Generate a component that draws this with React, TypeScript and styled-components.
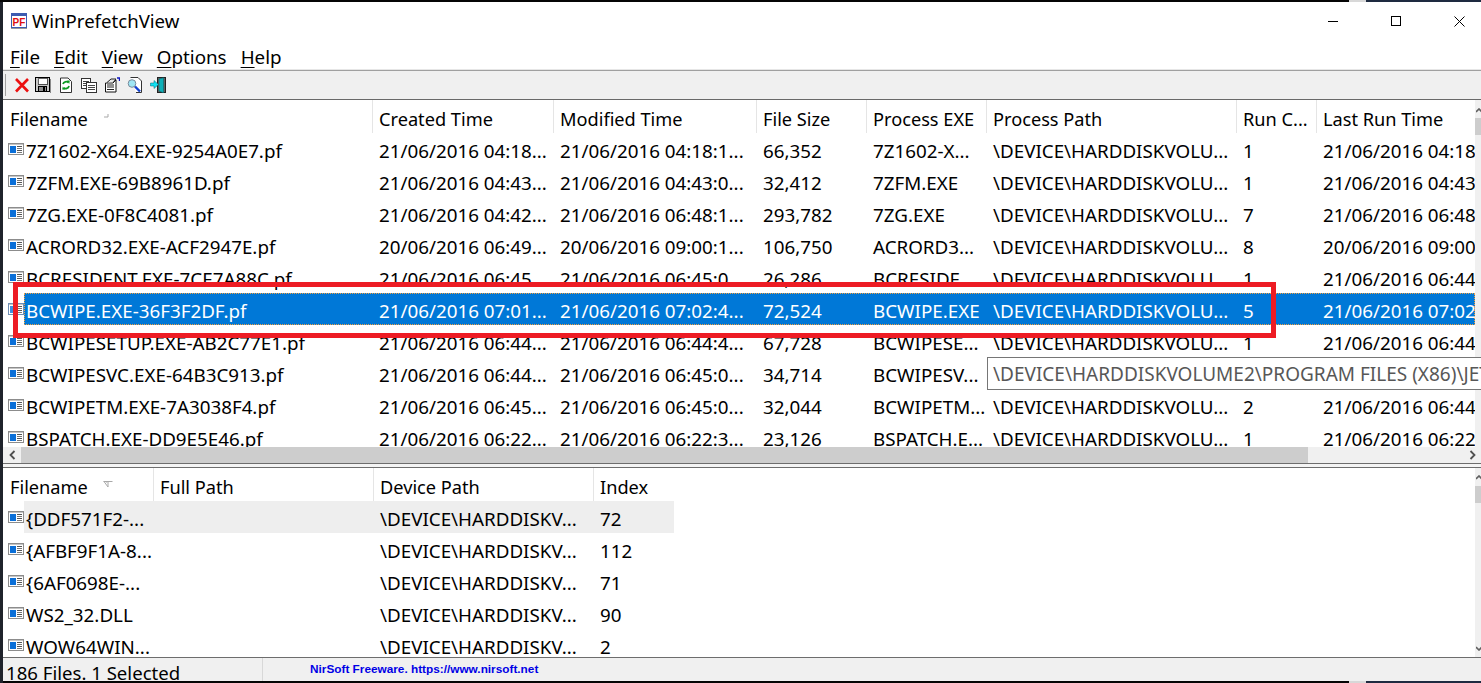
import React from "react";
import styled, { createGlobalStyle } from "styled-components";

const Global = createGlobalStyle`
  html, body { margin: 0; padding: 0; height: 100%; overflow: hidden; background: #1f232b; }
  #root { height: 100%; }
`;

const UI_FONT = `"Noto Sans", "Open Sans", sans-serif`;

const Page = styled.div`
  position: relative;
  width: 1481px;
  height: 683px;
  overflow: hidden;
  padding: 2px 0 2px 3px;
  box-sizing: border-box;
  background: linear-gradient(90deg, #050505 0, #050505 1349px, #d8d8d8 1349px, #d8d8d8 1366px, #1e2a40 1366px);
  font-family: ${UI_FONT};
  color: #000;
`;
const LeftEdge = styled.div`
  position: absolute;
  left: 0; top: 2px; bottom: 0;
  width: 3px;
  background: #1f232b;
`;
const Win = styled.div`
  height: 100%;
  background: #fff;
  display: flex;
  flex-direction: column;
  overflow: hidden;
`;
const TitleBar = styled.div`
  height: 38px;
  flex: none;
  display: flex;
  align-items: center;
  padding-left: 8px;
  gap: 5px;
`;
const TitleText = styled.div`
  font-size: 18.6px;
  line-height: 40px;
  flex: 1;
`;
const WinButtons = styled.div`
  display: flex;
  align-items: center;
  height: 38px;
  padding-right: 16px;
  gap: 52px;
`;
const MenuBar = styled.div`
  height: 30px;
  flex: none;
  display: flex;
  align-items: center;
  padding-left: 7px;
  gap: 14px;
  font-size: 18.8px;
  padding-top: 4px;
  box-sizing: border-box;
`;
const MenuKey = styled.span`
  text-decoration: underline;
  text-underline-offset: 3px;
  text-decoration-thickness: 1px;
`;
const Toolbar = styled.div`
  height: 30px;
  flex: none;
  box-sizing: border-box;
  border-top: 1px solid #a0a0a0;
  border-bottom: 1px solid #696969;
  box-shadow: 0 -1px 0 #e6e6e6;
  background: #f0f0f0;
  display: flex;
  align-items: center;
  padding-left: 2px;
  gap: 7px;
`;
const Grip = styled.div`
  width: 1px;
  height: 22px;
  background: #a0a0a0;
`;
const Pane = styled.div<{ $h?: number }>`
  display: flex;
  flex: ${(p) => (p.$h ? `none` : `1`)};
  height: ${(p) => (p.$h ? `${p.$h}px` : `auto`)};
  min-height: 0;
  overflow: hidden;
`;
const ListArea = styled.div`
  flex: 1;
  min-width: 0;
  overflow: hidden;
`;
const HeaderRow = styled.div<{ $cols: string }>`
  display: grid;
  grid-template-columns: ${(p) => p.$cols};
  height: 33px;
`;
const HeaderCell = styled.div`
  position: relative;
  box-sizing: border-box;
  border-right: 1px solid #e5e5e5;
  padding: 4px 0 0 6px;
  font-size: 18.2px;
  line-height: 30px;
  white-space: nowrap;
  overflow: hidden;
  &:first-child { padding-left: 7px; }
  &:last-child { border-right: 0; }
`;
const SortMark = styled.svg`
  position: absolute;
  left: 100px;
  top: 13px;
`;
const Row = styled.div<{ $cols: string; $sel?: boolean; $soft?: boolean }>`
  position: relative;
  display: grid;
  grid-template-columns: ${(p) => p.$cols};
  height: 32px;
  color: ${(p) => (p.$sel ? "#fff" : "#000")};
  &::before {
    content: "";
    position: absolute;
    left: 21px;
    top: 0;
    bottom: 0;
    box-sizing: border-box;
    ${(p) => (p.$sel ? "right: 0; background: #0078d7; border: 1px dotted #f0a040;" : "")}
    ${(p) => (p.$soft ? "width: 650px; background: #eeeeee;" : "")}
  }
`;
const Cell = styled.div`
  position: relative;
  box-sizing: border-box;
  padding: 3px 0 0 6px;
  font-size: 18.8px;
  line-height: 30px;
  white-space: nowrap;
  overflow: hidden;
`;
const NameCell = styled(Cell)`
  display: flex;
  align-items: center;
  padding: 0 0 0 5px;
  gap: 2px;
  & > span { line-height: 30px; padding-top: 3px; }
  & > svg { flex: none; }
`;
const VScroll = styled.div`
  flex: none;
  width: 6px;
  background: #f0f0f0;
  padding-top: 18px;
  position: relative;
`;
const VThumb = styled.div`
  height: 17px;
  background: #cdcdcd;
`;
const VArrow = styled.svg`
  position: absolute;
  left: 1px;
`;
const HScroll = styled.div`
  height: 16px;
  flex: none;
  background: #f0f0f0;
  display: flex;
  align-items: center;
`;
const HArrow = styled.div`
  width: 18px;
  flex: none;
  display: flex;
  align-items: center;
  justify-content: center;
`;
const HThumb = styled.div`
  width: 1287px;
  flex: none;
  height: 100%;
  background: #cdcdcd;
`;
const HTrack = styled.div`
  flex: 1;
`;
const Splitter = styled.div`
  height: 5px;
  flex: none;
  box-sizing: border-box;
  border-top: 1px solid #6d6d6d;
  border-bottom: 1px solid #6d6d6d;
  background: #f4f4f4;
`;
const StatusBar = styled.div`
  height: 24px;
  flex: none;
  box-sizing: border-box;
  border-top: 1px solid #6d6d6d;
  background: #f0f0f0;
  display: flex;
  overflow: hidden;
`;
const StatusLeft = styled.div`
  width: 260px;
  flex: none;
  box-sizing: border-box;
  padding-left: 3px;
  font-size: 18.6px;
  line-height: 30px;
  white-space: nowrap;
  border-right: 1px solid #d8d8d8;
`;
const StatusLink = styled.div`
  font-family: "Liberation Sans", Arial, sans-serif;
  font-weight: bold;
  font-size: 11.8px;
  line-height: 22px;
  padding-left: 47px;
  color: #0000e6;
  white-space: nowrap;
`;
const Tooltip = styled.div`
  position: absolute;
  left: 987px;
  top: 357px;
  width: 520px;
  height: 33px;
  box-sizing: border-box;
  background: #fff;
  border: 1px solid #767676;
  padding-left: 5px;
  font-size: 19px;
  line-height: 33px;
  color: #575757;
  white-space: nowrap;
  overflow: hidden;
`;
const Callout = styled.div`
  position: absolute;
  left: 13px;
  top: 282px;
  width: 1263px;
  height: 56px;
  box-sizing: border-box;
  border: 5px solid #ed1c24;
`;

const RowIcon = ({ pale }: { pale?: boolean }) => (
  <svg width="16" height="12" viewBox="0 0 16 12" shapeRendering="crispEdges">
    <rect x="0.5" y="0.5" width="15" height="11" fill="#fff" stroke={pale ? "#6f8fb5" : "#8c8c8c"} />
    <rect x="1" y="1" width="14" height="1" fill="#c4c4c4" />
    <rect x="2" y="3" width="6" height="7" fill={pale ? "#3f8fe0" : "#0a6fd8"} />
    <rect x="9" y="3" width="5" height="1" fill="#555" />
    <rect x="9" y="5" width="5" height="1" fill="#777" />
    <rect x="9" y="7" width="5" height="1" fill="#555" />
    <rect x="9" y="9" width="5" height="1" fill="#777" />
  </svg>
);

const AppIcon = () => (
  <svg width="16" height="16" viewBox="0 0 16 16" shapeRendering="crispEdges">
    <rect x="0" y="0" width="16" height="15" fill="#3d5bb0" />
    <rect x="0" y="15" width="16" height="1" fill="#9a9a9a" />
    <rect x="1" y="3" width="14" height="11" fill="#fff" />
    <text x="8" y="12.5" textAnchor="middle" fontFamily="Liberation Sans" fontWeight="bold" fontSize="10" fill="#e01010">PF</text>
  </svg>
);

const Tool = { width: 16, height: 16, viewBox: "0 0 16 16" };

const ToolDelete = () => (
  <svg {...Tool} style={{ marginLeft: 1, marginRight: -2 }}>
    <path d="M2 2 L14 14.5 M14 2 L2 14.5" stroke="#ec1010" strokeWidth="2.6" fill="none" />
  </svg>
);
const ToolSave = () => (
  <svg {...Tool} shapeRendering="crispEdges">
    <rect x="0.5" y="0.5" width="14" height="14" fill="#c8c8c8" stroke="#000" />
    <rect x="3" y="1" width="9" height="6" fill="#fff" stroke="#000" strokeWidth="0.6" />
    <rect x="3.5" y="9.5" width="8" height="5" fill="#909090" stroke="#000" />
    <rect x="8" y="10" width="2" height="4" fill="#000" />
    <rect x="15" y="2" width="1" height="14" fill="#8a8a8a" />
  </svg>
);
const ToolRefresh = () => (
  <svg {...Tool}>
    <path d="M2.5 1 H10 L13.5 4.5 V15.5 H2.5 Z" fill="#fff" stroke="#333" />
    <path d="M5 7 A3.4 3.4 0 0 1 10.5 5.5 M11 9 A3.4 3.4 0 0 1 5.5 10.8" fill="none" stroke="#0a9a20" strokeWidth="1.8" />
    <path d="M9 3.5 L11.8 3.6 L11.2 7 Z M7 12.8 L4.2 12.6 L4.8 9.4 Z" fill="#0a9a20" />
  </svg>
);
const ToolCopy = () => (
  <svg {...Tool} shapeRendering="crispEdges">
    <rect x="0.5" y="1.5" width="9" height="10" fill="#fff" stroke="#333" />
    <path d="M2 4 H8 M2 6 H8 M2 8 H8" stroke="#444" />
    <rect x="5.5" y="5.5" width="10" height="10" fill="#fff" stroke="#333" />
    <path d="M7 8 H14 M7 10 H14 M7 12 H14" stroke="#444" />
  </svg>
);
const ToolProps = () => (
  <svg {...Tool}>
    <path d="M1.5 6 H9 L12 3 V15 H1.5 Z" fill="#fff" stroke="#111" />
    <path d="M3 8 H10 M3 10 H10 M3 12.5 H10" stroke="#222" strokeWidth="1" />
    <path d="M3 5.5 L7 2 H12 L9.5 5" fill="#e8e8e8" stroke="#222" />
    <path d="M13 1 H15.5 V4" fill="none" stroke="#1018c0" strokeWidth="1.4" />
  </svg>
);
const ToolFind = () => (
  <svg {...Tool}>
    <path d="M3.5 0.5 H11 L14.5 4 V15.5 H9" fill="#fff" stroke="#333" />
    <circle cx="5" cy="6.5" r="3.8" fill="#9fe6f5" stroke="#7a8a9a" />
    <path d="M8 9.5 L13 14.5" stroke="#1040d0" strokeWidth="2.4" />
  </svg>
);
const ToolExit = () => (
  <svg {...Tool}>
    <rect x="7.5" y="0.5" width="8" height="15" fill="#606060" stroke="#222" />
    <path d="M9 2 L13.5 0.8 V15.8 L9 14 Z" fill="#0fb0b8" stroke="#0a6a70" strokeWidth="0.6" />
    <path d="M0.5 6 H4 V3.5 L8.5 7.5 L4 11.5 V9 H0.5 Z" fill="#10e0f0" stroke="#067" strokeWidth="0.5" />
  </svg>
);

const Minimize = () => (
  <svg width="11" height="11" viewBox="0 0 11 11" shapeRendering="crispEdges">
    <rect x="0" y="5" width="10" height="1" fill="#000" />
  </svg>
);
const Maximize = () => (
  <svg width="11" height="11" viewBox="0 0 11 11" shapeRendering="crispEdges">
    <rect x="0.5" y="0.5" width="9" height="9" fill="none" stroke="#000" />
  </svg>
);
const Close = () => (
  <svg width="11" height="11" viewBox="0 0 11 11">
    <path d="M0.5 0.5 L10.5 10.5 M10.5 0.5 L0.5 10.5" stroke="#000" strokeWidth="1" />
  </svg>
);

const topCols = "370px 181px 203px 110px 120px 250px 80px 200px";
const botCols = "151px 220px 220px 80px";

const topHeaders = ["Filename", "Created Time", "Modified Time", "File Size", "Process EXE", "Process Path", "Run C...", "Last Run Time"];
const P = "\\DEVICE\\HARDDISKVOLU...";
const topRows: string[][] = [
  ["7Z1602-X64.EXE-9254A0E7.pf", "21/06/2016 04:18...", "21/06/2016 04:18:1...", "66,352", "7Z1602-X...", P, "1", "21/06/2016 04:18:18"],
  ["7ZFM.EXE-69B8961D.pf", "21/06/2016 04:43...", "21/06/2016 04:43:0...", "32,412", "7ZFM.EXE", P, "1", "21/06/2016 04:43:02"],
  ["7ZG.EXE-0F8C4081.pf", "21/06/2016 04:42...", "21/06/2016 06:48:1...", "293,782", "7ZG.EXE", P, "7", "21/06/2016 06:48:10"],
  ["ACRORD32.EXE-ACF2947E.pf", "20/06/2016 06:49...", "20/06/2016 09:00:1...", "106,750", "ACRORD3...", P, "8", "20/06/2016 09:00:10"],
  ["BCRESIDENT.EXE-7CE7A88C.pf", "21/06/2016 06:45...", "21/06/2016 06:45:0...", "26,286", "BCRESIDE...", P, "1", "21/06/2016 06:44:58"],
  ["BCWIPE.EXE-36F3F2DF.pf", "21/06/2016 07:01...", "21/06/2016 07:02:4...", "72,524", "BCWIPE.EXE", P, "5", "21/06/2016 07:02:40"],
  ["BCWIPESETUP.EXE-AB2C77E1.pf", "21/06/2016 06:44...", "21/06/2016 06:44:4...", "67,728", "BCWIPESE...", P, "1", "21/06/2016 06:44:40"],
  ["BCWIPESVC.EXE-64B3C913.pf", "21/06/2016 06:44...", "21/06/2016 06:45:0...", "34,714", "BCWIPESV...", P, "1", "21/06/2016 06:44:58"],
  ["BCWIPETM.EXE-7A3038F4.pf", "21/06/2016 06:45...", "21/06/2016 06:45:0...", "32,044", "BCWIPETM...", P, "2", "21/06/2016 06:44:58"],
  ["BSPATCH.EXE-DD9E5E46.pf", "21/06/2016 06:22...", "21/06/2016 06:22:3...", "23,126", "BSPATCH.E...", P, "1", "21/06/2016 06:22:30"],
];
const botHeaders = ["Filename", "Full Path", "Device Path", "Index"];
const D = "\\DEVICE\\HARDDISKV...";
const botRows: string[][] = [
  ["{DDF571F2-...", "", D, "72"],
  ["{AFBF9F1A-8...", "", D, "112"],
  ["{6AF0698E-...", "", D, "71"],
  ["WS2_32.DLL", "", D, "90"],
  ["WOW64WIN...", "", D, "2"],
];

export default function App() {
  return (
    <>
      <Global />
      <Page>
        <LeftEdge />
        <Win>
          <TitleBar>
            <AppIcon />
            <TitleText>WinPrefetchView</TitleText>
            <WinButtons>
              <Minimize />
              <Maximize />
              <Close />
            </WinButtons>
          </TitleBar>
          <MenuBar>
            <span><MenuKey>F</MenuKey>ile</span>
            <span><MenuKey>E</MenuKey>dit</span>
            <span><MenuKey>V</MenuKey>iew</span>
            <span><MenuKey>O</MenuKey>ptions</span>
            <span><MenuKey>H</MenuKey>elp</span>
          </MenuBar>
          <Toolbar>
            <Grip />
            <ToolDelete />
            <ToolSave />
            <ToolRefresh />
            <ToolCopy />
            <ToolProps />
            <ToolFind />
            <ToolExit />
          </Toolbar>
          <Pane $h={347}>
            <ListArea>
              <HeaderRow $cols={topCols}>
                {topHeaders.map((h, i) => (
                  <HeaderCell key={h}>
                    {h}
                    {i === 0 && (
                      <SortMark width="6" height="6" viewBox="0 0 6 6">
                        <path d="M5 1 V4 H1" fill="none" stroke="#a8a8a8" />
                      </SortMark>
                    )}
                  </HeaderCell>
                ))}
              </HeaderRow>
              {topRows.map((r, i) => (
                <Row key={r[0]} $cols={topCols} $sel={i === 5}>
                  <NameCell>
                    <RowIcon pale={i === 5} />
                    <span>{r[0]}</span>
                  </NameCell>
                  {r.slice(1).map((c, j) => (
                    <Cell key={j}>{c}</Cell>
                  ))}
                </Row>
              ))}
            </ListArea>
            <VScroll>
              <VArrow width="6" height="5" viewBox="0 0 6 5" style={{ top: 8 }}>
                <path d="M0 4 L3 1 L6 4" fill="none" stroke="#606060" strokeWidth="1.6" />
              </VArrow>
              <VThumb />
            </VScroll>
          </Pane>
          <HScroll>
            <HArrow>
              <svg width="7" height="10" viewBox="0 0 7 10"><path d="M5.5 1 L1.5 5 L5.5 9" fill="none" stroke="#505050" strokeWidth="1.8" /></svg>
            </HArrow>
            <HThumb />
            <HTrack />
            <HArrow>
              <svg width="7" height="10" viewBox="0 0 7 10"><path d="M1.5 1 L5.5 5 L1.5 9" fill="none" stroke="#505050" strokeWidth="1.8" /></svg>
            </HArrow>
          </HScroll>
          <Splitter />
          <Pane>
            <ListArea>
              <HeaderRow $cols={botCols}>
                {botHeaders.map((h, i) => (
                  <HeaderCell key={h}>
                    {h}
                    {i === 0 && (
                      <SortMark width="10" height="7" viewBox="0 0 10 7">
                        <path d="M0.5 0.5 H9.5 M1 0.5 L5 6 M5 6 V2 M3 1 L6 1" fill="none" stroke="#a8a8a8" />
                      </SortMark>
                    )}
                  </HeaderCell>
                ))}
              </HeaderRow>
              {botRows.map((r, i) => (
                <Row key={r[0]} $cols={botCols} $soft={i === 0}>
                  <NameCell>
                    <RowIcon />
                    <span>{r[0]}</span>
                  </NameCell>
                  {r.slice(1).map((c, j) => (
                    <Cell key={j}>{c}</Cell>
                  ))}
                </Row>
              ))}
            </ListArea>
            <VScroll>
              <VArrow width="6" height="5" viewBox="0 0 6 5" style={{ top: 7 }}>
                <path d="M0 4 L3 1 L6 4" fill="none" stroke="#606060" strokeWidth="1.6" />
              </VArrow>
              <VThumb />
              <VArrow width="6" height="5" viewBox="0 0 6 5" style={{ bottom: 6 }}>
                <path d="M0 1 L3 4 L6 1" fill="none" stroke="#606060" strokeWidth="1.6" />
              </VArrow>
            </VScroll>
          </Pane>
          <StatusBar>
            <StatusLeft>186 Files. 1 Selected</StatusLeft>
            <StatusLink>NirSoft Freeware. https://www.nirsoft.net</StatusLink>
          </StatusBar>
        </Win>
        <Tooltip>\DEVICE\HARDDISKVOLUME2\PROGRAM FILES (X86)\JETICO\BCWIPE\BCWIPE.EXE</Tooltip>
        <Callout />
      </Page>
    </>
  );
}
